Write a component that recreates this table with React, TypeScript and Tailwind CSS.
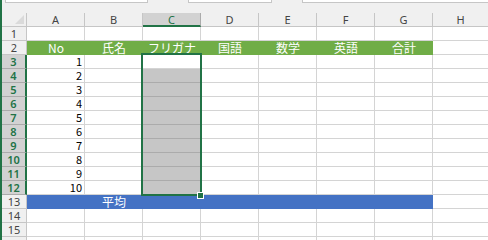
import React from "react";

const cols = ["A", "B", "C", "D", "E", "F", "G"];
const heads = ["No", "氏名", "フリガナ", "国語", "数学", "英語", "合計"];
const jp = "font-['Noto_Sans_CJK_JP',sans-serif]";

function RowHeader({ n, active }: { n: number; active: boolean }) {
  return (
    <div
      className={`w-[25px] h-[14px] shrink-0 flex items-center justify-center text-[11px] leading-none border-b ${
        active
          ? "bg-[#d2d2d2] text-[#217346] font-semibold border-b-[#ababab] border-r-2 border-r-[#217346]"
          : "bg-[#f0f0f0] text-[#444] border-b-[#c6c6c6] border-r border-r-[#c6c6c6]"
      } font-['Noto_Sans',sans-serif]`}
    >
      {n <= 15 ? n : ""}
    </div>
  );
}

function Row({ n }: { n: number }) {
  const active = n >= 3 && n <= 12;
  if (n === 2) {
    return (
      <div className="flex h-[14px]">
        <RowHeader n={n} active={false} />
        {heads.map((h) => (
          <div
            key={h}
            className={`w-[58px] h-[14px] shrink-0 bg-[#70ad47] text-white text-[12px] leading-none flex items-center justify-center ${jp}`}
          >
            {h}
          </div>
        ))}
        <div className="flex-1 border-b border-[#d4d4d4]" />
      </div>
    );
  }
  if (n === 13) {
    return (
      <div className="flex h-[14px]">
        <RowHeader n={n} active={false} />
        <div className={`w-[174px] shrink-0 bg-[#4472c4] text-white text-[12px] leading-none flex items-center justify-center ${jp}`}>
          平均
        </div>
        <div className="w-[232px] shrink-0 bg-[#4472c4]" />
        <div className="flex-1 border-b border-[#d4d4d4]" />
      </div>
    );
  }
  return (
    <div className="flex h-[14px]">
      <RowHeader n={n} active={active} />
      {cols.map((c) => {
        const sel = c === "C" && n >= 4 && n <= 12;
        return (
          <div
            key={c}
            className={`w-[58px] h-[14px] shrink-0 border-r border-b flex items-center justify-end pr-[2px] text-[11px] leading-none text-black ${jp} ${
              sel ? "bg-[#c6c6c6] border-b-[#ababab] border-r-[#d4d4d4]" : "border-[#d4d4d4]"
            }`}
          >
            {c === "A" && active ? n - 2 : ""}
          </div>
        );
      })}
      <div className="flex-1 border-b border-[#d4d4d4]" />
    </div>
  );
}

export default function App() {
  const rows = Array.from({ length: 16 }, (_, i) => i + 1);
  return (
    <div className="w-[488px] h-[240px] bg-white overflow-hidden border-l-2 border-[#217346] flex flex-col">
      <div className="h-[13px] shrink-0 bg-[#f0f0f0] flex items-start">
        <div className="w-[143px] h-[3px] ml-[3px] bg-white border-b border-r border-l border-[#c6c6c6]" />
        <div className="w-[40px]" />
        <div className="w-[84px] h-[3px] bg-white border-b border-r border-l border-[#c6c6c6]" />
        <div className="w-[30px]" />
        <div className="flex-1 h-[3px] bg-white border-b border-l border-[#c6c6c6]" />
      </div>
      <div className="flex h-[14px] shrink-0 bg-[#f0f0f0] font-['Noto_Sans',sans-serif] text-[11px] leading-none">
        <div className="w-[25px] shrink-0 border-r border-b border-[#c6c6c6] relative">
          <div className="absolute right-[2px] bottom-[2px] w-0 h-0 border-l-[9px] border-l-transparent border-b-[9px] border-b-[#dadada]" />
        </div>
        {cols.map((c) => (
          <div
            key={c}
            className={`w-[58px] shrink-0 flex items-center justify-center border-r ${
              c === "C"
                ? "bg-[#d2d2d2] text-[#217346] border-b-2 border-b-[#217346] border-r-[#ababab]"
                : "text-[#444] border-b border-[#c6c6c6]"
            }`}
          >
            {c}
          </div>
        ))}
        <div className="flex-1 flex items-center justify-center text-[#444] border-b border-[#c6c6c6]">H</div>
      </div>
      <div className="relative flex-1">
        {rows.map((n) => (
          <Row key={n} n={n} />
        ))}
        <div className="absolute left-[139px] top-[26px] w-[61px] h-[143px] border-2 border-[#217346]" />
        <div className="absolute left-[195px] top-[165px] w-[7px] h-[7px] bg-[#217346] border border-white" />
      </div>
    </div>
  );
}
